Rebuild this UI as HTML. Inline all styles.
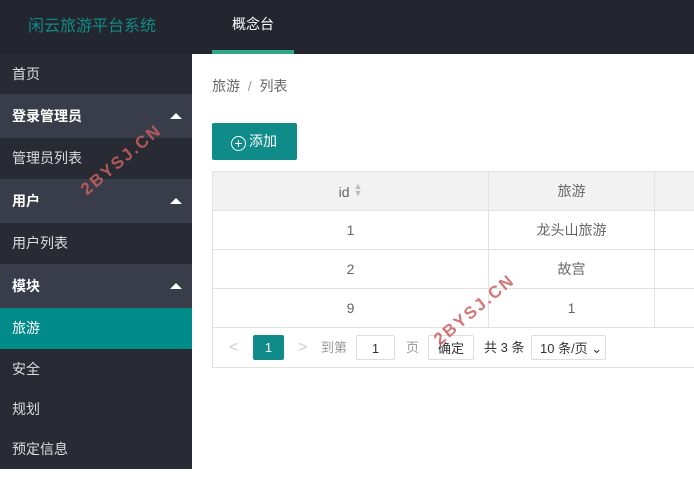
<!DOCTYPE html>
<html><head><meta charset="utf-8"><style>
*{margin:0;padding:0;box-sizing:border-box}
body{width:694px;height:496px;overflow:hidden;background:#fff;font-family:"Liberation Sans","Noto Sans CJK SC",sans-serif;font-size:14px;color:#666;position:relative}
.hd{position:absolute;left:0;top:0;width:694px;height:54px;background:#23262e}
.logo{position:absolute;left:28px;top:12px;font-size:16px;color:#0f8a88}
.nav{position:absolute;left:232px;top:14px;color:#fff;font-size:14px}
.nav-u{position:absolute;left:212px;top:50px;width:82px;height:4px;background:#30a886}
.sb{position:absolute;left:0;top:54px;width:192px;height:415px;background:#282b33}
.it{height:41px;line-height:41px;padding-left:12px;color:#ddd;position:relative}
.g{height:44px;line-height:44px;background:#393d49;color:#fff;font-weight:bold}
.g:after{content:"";position:absolute;right:10px;top:19px;border-left:6px solid transparent;border-right:6px solid transparent;border-bottom:6px solid #fff}
.s{height:40px;line-height:40px}
.on{background:#008b8b;color:#fff}
.bc{position:absolute;left:212px;top:76px;color:#666}
.btn{position:absolute;left:212px;top:123px;width:85px;height:37px;background:#0f8b89;border-radius:2px;color:#fff;line-height:37px;padding-left:19px}
.btn span{display:inline-block;width:15px;height:15px;border:1.5px solid #fff;border-radius:50%;text-align:center;line-height:12px;font-size:14px;vertical-align:-2px;margin-right:3px}
table{position:absolute;left:212px;top:171px;border-collapse:collapse;width:520px}
td,th{border:1px solid #e2e2e2;height:39px;text-align:center;font-weight:normal;color:#666}
th{background:#f2f2f2}
.pg{position:absolute;left:212px;top:327px;width:500px;height:41px;border:1px solid #e2e2e2;border-top:none}
.pg>*{position:absolute;top:8px;height:25px;line-height:25px;font-size:13px}
.box{border:1px solid #ddd;background:#fff;text-align:center;color:#333;border-radius:2px}
.wm{position:absolute;color:#c96060;font-weight:bold;font-size:17px;letter-spacing:2px;transform:rotate(-40deg);opacity:.85}
</style></head><body>
<div class="hd"><div class="logo">闲云旅游平台系统</div><div class="nav">概念台</div><div class="nav-u"></div></div>
<div class="sb">
<div class="it s">首页</div>
<div class="it g">登录管理员</div>
<div class="it">管理员列表</div>
<div class="it g">用户</div>
<div class="it">用户列表</div>
<div class="it g">模块</div>
<div class="it on">旅游</div>
<div class="it s">安全</div>
<div class="it s">规划</div>
<div class="it s">预定信息</div>
</div>
<div class="bc">旅游 &nbsp;<span style="color:#999">/</span>&nbsp; 列表</div>
<div class="btn"><span>+</span>添加</div>
<table>
<tr><th style="width:276px">id <span style="color:#bbb;font-size:9px;display:inline-block;line-height:7px;vertical-align:1px">▲<br>▼</span></th><th style="width:166px">旅游</th><th></th></tr>
<tr><td>1</td><td>龙头山旅游</td><td></td></tr>
<tr><td>2</td><td>故宫</td><td></td></tr>
<tr><td>9</td><td>1</td><td></td></tr>
</table>
<div class="pg">
<div style="left:16px;color:#ccc;font-size:16px">&lt;</div>
<div style="left:40px;width:31px;background:#0f8b89;color:#fff;text-align:center;border-radius:2px">1</div>
<div style="left:85px;color:#ccc;font-size:16px">&gt;</div>
<div style="left:108px;color:#999">到第</div>
<div class="box" style="left:143px;width:39px">1</div>
<div style="left:193px;color:#999">页</div>
<div class="box" style="left:215px;width:46px">确定</div>
<div style="left:271px;color:#333">共 3 条</div>
<div class="box" style="left:318px;width:75px;text-align:left;padding-left:8px">10 条/页 ⌄</div>
</div>
<div class="wm" style="left:72px;top:150px">2BYSJ.CN</div>
<div class="wm" style="left:425px;top:300px">2BYSJ.CN</div>
</body></html>
